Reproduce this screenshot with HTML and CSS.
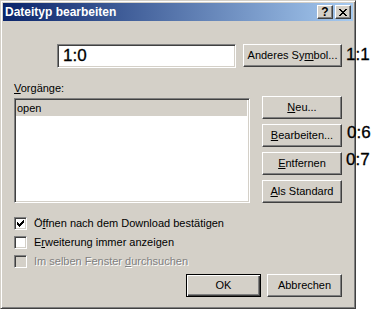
FILE: index.html
```html
<!DOCTYPE html>
<html lang="de">
<head>
<meta charset="utf-8">
<title>Dateityp bearbeiten</title>
<link rel="stylesheet" href="styles.css">
</head>
<body>
<div class="window">
  <div class="titlebar">
    <span class="title">Dateityp bearbeiten</span>
    <div class="tbtns">
      <span class="tbtn help">?</span>
      <span class="tbtn close">
        <svg width="8" height="7" viewBox="0 0 8 7" shape-rendering="crispEdges">
          <path d="M0 0h2v1h-2z M6 0h2v1h-2z M1 1h2v1h-2z M5 1h2v1h-2z M2 2h4v1h-4z M3 3h2v1h-2z M2 4h4v1h-4z M1 5h2v1h-2z M5 5h2v1h-2z M0 6h2v1h-2z M6 6h2v1h-2z" fill="#000"/>
        </svg>
      </span>
    </div>
  </div>
  <div class="client">
    <div class="row-top">
      <div class="field big">1:0</div>
      <div class="btn btn-symbol">Anderes Sy<u>m</u>bol...</div>
    </div>
    <div class="label"><u>V</u>orgänge:</div>
    <div class="row-list">
      <div class="listbox">
        <div class="item sel">open</div>
      </div>
      <div class="btncol">
        <div class="btn btn-side"><u>N</u>eu...</div>
        <div class="btn btn-side"><u>B</u>earbeiten...</div>
        <div class="btn btn-side"><u>E</u>ntfernen</div>
        <div class="btn btn-side"><u>A</u>ls Standard</div>
      </div>
    </div>
    <div class="checks">
      <div class="check">
        <span class="box">
          <svg width="7" height="7" viewBox="0 0 7 7" shape-rendering="crispEdges">
            <path d="M0 2h1v3h-1z M1 3h1v3h-1z M2 4h1v3h-1z M3 3h1v3h-1z M4 2h1v3h-1z M5 1h1v3h-1z M6 0h1v3h-1z" fill="#000"/>
          </svg>
        </span>
        <span class="ctext">Ö<u>f</u>fnen nach dem Download bestätigen</span>
      </div>
      <div class="check">
        <span class="box"></span>
        <span class="ctext">E<u>r</u>weiterung immer anzeigen</span>
      </div>
      <div class="check disabled">
        <span class="box"></span>
        <span class="ctext">Im selben Fenster <u>d</u>urchsuchen</span>
      </div>
    </div>
    <div class="footer">
      <div class="btn btn-foot default">OK</div>
      <div class="btn btn-foot">Abbrechen</div>
    </div>
  </div>
  <span class="note note-1">1:1</span>
  <span class="note note-2">0:6</span>
  <span class="note note-3">0:7</span>
</div>
</body>
</html>
```

FILE: styles.css
```css
html, body {
  margin: 0;
  padding: 0;
  background: #ffffff;
}

body {
  font-family: "Liberation Sans", Arial, sans-serif;
  font-size: 11px;
  color: #000;
}

.window {
  position: relative;
  box-sizing: border-box;
  width: 356px;
  height: 309px;
  background: #d4d0c8;
  border: 1px solid;
  border-color: #d4d0c8 #404040 #404040 #d4d0c8;
  box-shadow: inset 1px 1px #ffffff, inset -1px -1px #808080;
  padding: 2px;
  display: flex;
  flex-direction: column;
}

.titlebar {
  height: 18px;
  display: flex;
  align-items: center;
  justify-content: space-between;
  background: linear-gradient(to right, #0a246a, #a6caf0);
  padding-left: 2px;
  padding-right: 2px;
}

.title {
  color: #fff;
  font-weight: bold;
  font-size: 12px;
  line-height: 14px;
}

.tbtns {
  display: flex;
  gap: 2px;
}

.tbtn {
  box-sizing: border-box;
  width: 16px;
  height: 14px;
  background: #d4d0c8;
  border: 1px solid;
  border-color: #ffffff #404040 #404040 #ffffff;
  box-shadow: inset -1px -1px #808080;
  display: flex;
  align-items: center;
  justify-content: center;
}

.help {
  font-weight: bold;
  font-size: 12px;
  line-height: 12px;
  font-family: "Liberation Sans", Arial, sans-serif;
}

.close svg {
  display: block;
}

.client {
  flex: 1;
  padding: 23px 11px 0 11px;
  display: flex;
  flex-direction: column;
}

.row-top {
  display: flex;
  justify-content: flex-end;
  align-items: flex-start;
  gap: 7px;
}

.field {
  box-sizing: border-box;
  background: #fff;
  border: 1px solid;
  border-color: #808080 #ffffff #ffffff #808080;
  box-shadow: inset 1px 1px #404040, inset -1px -1px #d4d0c8;
}

.big {
  width: 179px;
  height: 24px;
  font-size: 17px;
  line-height: 22px;
  padding-left: 5px;
  -webkit-text-stroke: 0.3px #000;
}

.btn {
  box-sizing: border-box;
  height: 23px;
  background: #d4d0c8;
  border: 1px solid;
  border-color: #ffffff #404040 #404040 #ffffff;
  box-shadow: inset -1px -1px #808080;
  display: flex;
  align-items: center;
  justify-content: center;
  line-height: 13px;
}

.btn-symbol {
  width: 99px;
}

.label {
  margin-top: 14px;
  line-height: 13px;
  margin-bottom: 3px;
}

.row-list {
  display: flex;
  justify-content: space-between;
  align-items: flex-start;
  margin-top: -2px;
}

.listbox {
  box-sizing: border-box;
  width: 236px;
  height: 105px;
  margin-top: 2px;
  background: #fff;
  border: 1px solid;
  border-color: #808080 #ffffff #ffffff #808080;
  box-shadow: inset 1px 1px #404040, inset -1px -1px #d4d0c8;
  padding: 1px 2px 2px 1px;
}

.item {
  height: 16px;
  line-height: 16px;
  padding-left: 1px;
}

.sel {
  background: #d4d0c8;
}

.btncol {
  width: 80px;
  display: flex;
  flex-direction: column;
  gap: 5px;
}

.btn-side {
  width: 80px;
}

.checks {
  margin-top: 14px;
  display: flex;
  flex-direction: column;
  gap: 6px;
}

.check {
  display: flex;
  align-items: center;
  gap: 7px;
  height: 13px;
  line-height: 13px;
}

.box {
  box-sizing: border-box;
  width: 13px;
  height: 13px;
  background: #fff;
  border: 1px solid;
  border-color: #808080 #ffffff #ffffff #808080;
  box-shadow: inset 1px 1px #404040, inset -1px -1px #d4d0c8;
  display: flex;
  align-items: center;
  justify-content: center;
}

.box svg {
  display: block;
}

.disabled .box {
  background: #d4d0c8;
}

.disabled .ctext {
  color: #808080;
  text-shadow: 1px 1px #ffffff;
}

.footer {
  margin-top: 6px;
  display: flex;
  justify-content: flex-end;
  gap: 6px;
}

.btn-foot {
  width: 75px;
}

.default {
  border-color: #000;
  box-shadow: inset 1px 1px #ffffff, inset -1px -1px #404040, inset -2px -2px #808080;
}

.note {
  position: absolute;
  font-family: "Liberation Sans", Arial, sans-serif;
  font-size: 17px;
  line-height: 18px;
  color: #000;
  -webkit-text-stroke: 0.3px #000;
}

.note-1 {
  left: 345px;
  top: 45px;
}

.note-2 {
  left: 346px;
  top: 123px;
}

.note-3 {
  left: 345px;
  top: 150px;
}

u {
  text-decoration: underline;
  text-underline-offset: 1px;
}
```
